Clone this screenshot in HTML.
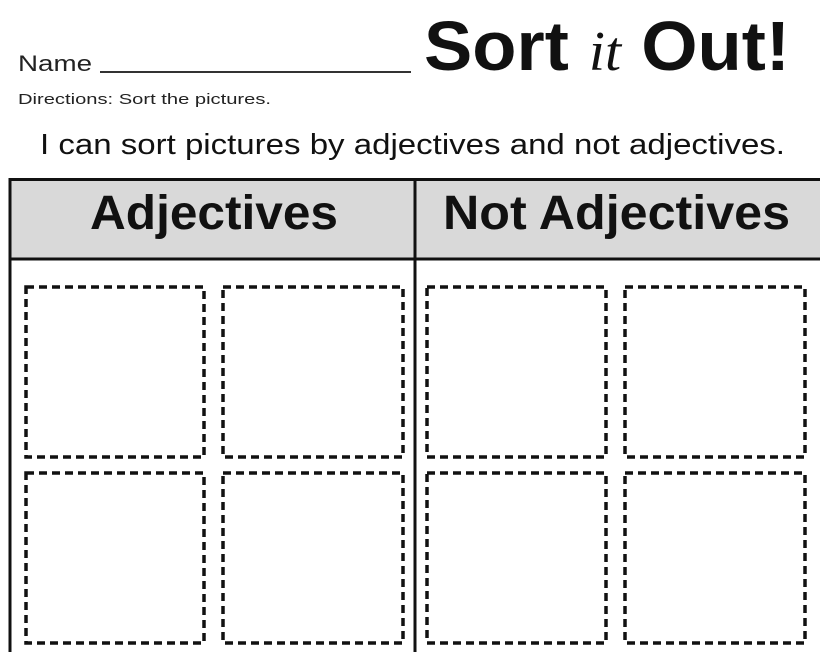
<!DOCTYPE html>
<html><head><style>
html,body{margin:0;padding:0;background:#fff;width:820px;height:652px;overflow:hidden;font-family:"Liberation Sans",sans-serif;color:#111;position:relative}
.a{position:absolute;white-space:nowrap}
</style></head><body>
<svg class="a" style="left:0;top:0" width="820" height="652">
<text x="18" y="71" font-family="Liberation Sans" font-size="22" fill="#222" textLength="74" lengthAdjust="spacingAndGlyphs">Name</text>
<line x1="100" y1="72" x2="411" y2="72" stroke="#333" stroke-width="2"/>
<text x="424" y="70" font-family="Liberation Sans" font-weight="bold" font-size="70" fill="#111" textLength="366" lengthAdjust="spacingAndGlyphs">Sort <tspan font-family="Liberation Serif" font-style="italic" font-weight="normal" font-size="56">it</tspan> Out!</text>
<text x="18" y="104" font-family="Liberation Sans" font-size="15" fill="#222" textLength="253" lengthAdjust="spacingAndGlyphs">Directions: Sort the pictures.</text>
<text x="40" y="154" font-family="Liberation Sans" font-size="29" fill="#111" textLength="745" lengthAdjust="spacingAndGlyphs">I can sort pictures by adjectives and not adjectives.</text>
<rect x="10" y="180" width="812" height="78" fill="#d9d9d9"/>
<line x1="10" y1="179.5" x2="822" y2="179.5" stroke="#111" stroke-width="3"/>
<line x1="10" y1="259" x2="822" y2="259" stroke="#111" stroke-width="3"/>
<line x1="10" y1="178" x2="10" y2="652" stroke="#111" stroke-width="3"/>
<line x1="415" y1="178" x2="415" y2="652" stroke="#111" stroke-width="3"/>
<text x="90" y="229" font-family="Liberation Sans" font-weight="bold" font-size="48" fill="#111" textLength="248" lengthAdjust="spacingAndGlyphs">Adjectives</text>
<text x="443" y="229" font-family="Liberation Sans" font-weight="bold" font-size="48" fill="#111" textLength="347" lengthAdjust="spacingAndGlyphs">Not Adjectives</text>
<g fill="none" stroke="#111" stroke-width="3.5" stroke-dasharray="8 5">
<rect x="26" y="287" width="178" height="170"/>
<rect x="223" y="287" width="180" height="170"/>
<rect x="427" y="287" width="179" height="170"/>
<rect x="625" y="287" width="180" height="170"/>
<rect x="26" y="473" width="178" height="170"/>
<rect x="223" y="473" width="180" height="170"/>
<rect x="427" y="473" width="179" height="170"/>
<rect x="625" y="473" width="180" height="170"/>
</g>
</svg>
</body></html>
